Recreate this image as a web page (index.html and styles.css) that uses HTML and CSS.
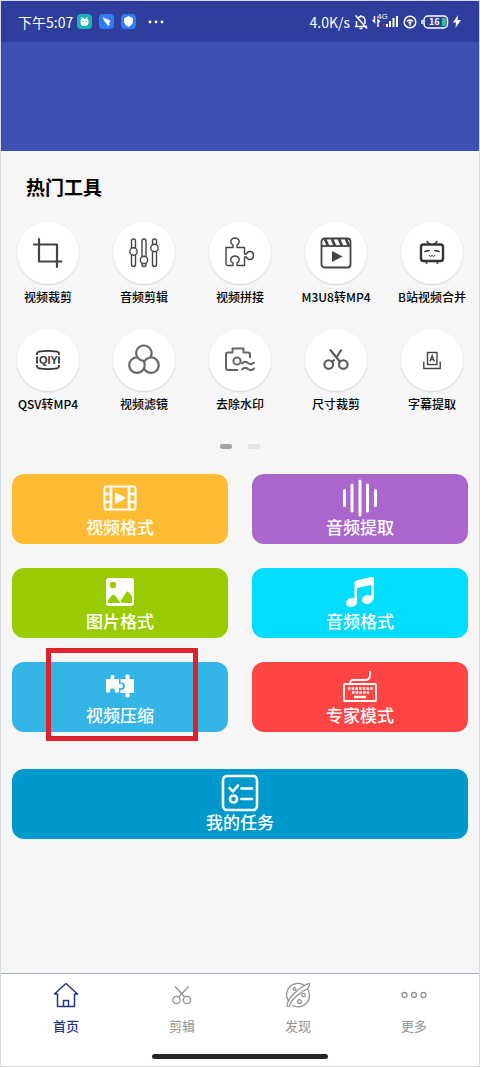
FILE: index.html
```html
<!DOCTYPE html>
<html lang="zh-CN">
<head>
<meta charset="utf-8">
<meta name="viewport" content="width=device-width, initial-scale=1">
<title>热门工具</title>
<link rel="stylesheet" href="styles.css">
</head>
<body>
<div class="app">
  <header class="top">
    <div class="status">
      <div class="status-side">
        <span>下午5:07</span>
        <svg class="badge" width="15" height="15" viewBox="0 0 15 15"><rect width="15" height="15" rx="4" fill="#19b3b5"/><path d="M4 6.500Q4 5 5.500 5h4Q11 5 11 6.500V9q0 2.500-2.500 2.500h-2Q4 11.500 4 9zM4.500 3l1.500 2.500M10.500 3 9 5.500" fill="#fff" stroke="#fff"/><path d="M6 7v1M9 7v1" stroke="#19b3b5"/></svg>
        <svg class="badge" width="15" height="15" viewBox="0 0 15 15"><rect width="15" height="15" rx="4" fill="#2f7df4"/><path d="M3.500 3c3 2 6 2 8 4L10 9.500l1 .5-2.500 3 .3-2L7 10l.5-1L5 7.500h1L4 5.500h1z" fill="#fff"/></svg>
        <svg class="badge" width="15" height="15" viewBox="0 0 15 15"><rect width="15" height="15" rx="4" fill="#2f7df4"/><path d="M7.500 2.500 11.500 4.500v3q0 3-4 5-4-2-4-5v-3z" fill="#fff" stroke="#fff" stroke-linejoin="round"/></svg>
        <svg class="more" width="16" height="4" viewBox="0 0 16 4" fill="#fff"><circle cx="2" cy="2" r="1.400"/><circle cx="8" cy="2" r="1.400"/><circle cx="14" cy="2" r="1.400"/></svg>
      </div>
      <div class="status-side status-right">
        <span>4.0K/s</span>
        <svg width="14" height="16" viewBox="0 0 14 16" fill="none" stroke="#fff" stroke-width="1.500"><path d="M1 12.500h10M2.500 12V7M4 4Q5 2.500 7 2.500q4 0 4 4.500v3M7 1v1M5.500 14.500h3M1.500 1.500l11.500 13M12 12l1 .5"/></svg>
        <svg width="27" height="27" viewBox="0 -5 27 27"><g fill="none" stroke="#fff" stroke-width="1.500"><path d="M2.500 3v6L.5 7M6 14V7l2 2"/></g><g fill="#fff"><rect x="14" y="11" width="2" height="3"/><rect x="17" y="8" width="2" height="6"/><rect x="20.500" y="5" width="2" height="9"/><rect x="24" y="3" width="2" height="11"/></g><rect x="10.500" y="11" width="2" height="2" fill="#b0306b"/><text class="net" x="5" y="6">4G</text></svg>
        <svg width="14" height="14" viewBox="0 0 14 14" fill="none" stroke="#fff" stroke-width="1.500"><circle cx="7" cy="7" r="5.800"/><path d="M4 6.300q3-2.500 6 0M7 6v4.500M5.500 7.800q1.500-1 3 0"/></svg>
        <svg width="28" height="14" viewBox="0 0 28 14"><rect x="3" y="1" width="23.500" height="12" rx="4" fill="none" stroke="#fff" stroke-width="1.500"/><path d="M1 5v4" stroke="#fff" stroke-width="1.500"/><path d="M21 3h2q2 0 2 2v4q0 2-2 2h-2z" fill="#29c793"/><text class="level" x="8" y="10">16</text></svg>
        <svg width="8" height="13" viewBox="0 0 8 13" fill="#fff"><path d="M5 0 0 7.500h3L2.500 13 8 5H4.500z"/></svg>
      </div>
    </div>
    <div class="banner"></div>
  </header>

  <main class="main">
    <h1 class="title">热门工具</h1>
    <div class="tools">
      <button class="tool"><span class="disc"><svg width="32" height="32" viewBox="0 0 32 32" fill="none" stroke="#444" stroke-width="2.200"><path d="M2 7.500H25V30M7 2v22.500h22.500" stroke-linecap="round" stroke-linejoin="round"/></svg></span><span>视频裁剪</span></button>
      <button class="tool"><span class="disc"><svg width="32" height="32" viewBox="0 0 32 32" fill="#fff" stroke="#444" stroke-width="1.400"><rect x="3.500" y="2" width="4" height="27.500" rx="2"/><rect x="14" y="2" width="4" height="27.500" rx="2"/><rect x="24.500" y="2" width="4" height="27.500" rx="2"/><circle cx="5.500" cy="14.500" r="3.700"/><circle cx="16" cy="23" r="3.700"/><circle cx="26.500" cy="11" r="3.700"/></svg></span><span>音频剪辑</span></button>
      <button class="tool"><span class="disc"><svg width="32" height="32" viewBox="0 0 32 32" fill="none" stroke="#444" stroke-width="1.400" stroke-linejoin="round"><path d="M2 10.500h7V8Q6 6 7 3.500q1-2.500 4-2.500t4 2.500Q16 6 13 8v2.500h7.500V17h2q1-3 4-2.500 3 .5 3 4t-3 4q-3 .5-4-2.500h-2v8.500H13V26q3-2 2-4.500-1-2.500-4-2.500t-4 2.500Q6 24 9 26v2.500H4.500Q2 28.500 2 26z"/></svg></span><span>视频拼接</span></button>
      <button class="tool"><span class="disc"><svg width="32" height="32" viewBox="0 0 32 32" fill="none" stroke="#444" stroke-width="1.800"><rect x="1.500" y="1.500" width="29" height="29" rx="3"/><path d="M1.500 9h29"/><path d="M5 2l3 7M12 2l3 7M19 2l3 7M26 2l3 7" stroke-width="2.800"/><path d="M12 14v11l10.500-5.500z" fill="#444" stroke="none"/></svg></span><span>M3U8转MP4</span></button>
      <button class="tool"><span class="disc"><svg width="32" height="32" viewBox="0 0 32 32" fill="none" stroke="#333" stroke-width="2.400" stroke-linecap="round"><rect x="5" y="7.500" width="22" height="16.500" rx="2.500"/><path d="M11 4.500l3 3M21 4.500l-3 3M10 26h1M21 26h1" stroke-width="1.400"/><path d="M9 14.500l4-1M23 14.500l-4-1" stroke-width="1.600"/><path d="M13 18.500q1.500 2 3 0 1.500 2 3 0" stroke-width="1"/></svg></span><span>B站视频合并</span></button>
      <button class="tool"><span class="disc"><svg width="32" height="32" viewBox="0 0 32 32" fill="none" stroke="#333" stroke-width="1.800"><path d="M5 11V9.500q0-1.500 2-1.800 9-1.500 18 0 2 .3 2 1.800V11M5 21v1.500q0 1.500 2 1.800 9 1.500 18 0 2-.3 2-1.800V21M5 12.500v7M27 12.500v7"/><text class="mark" x="7" y="20">QIY</text></svg></span><span>QSV转MP4</span></button>
      <button class="tool"><span class="disc"><svg width="32" height="32" viewBox="0 0 32 32" fill="none" stroke="#6a6a6a" stroke-width="2.200"><path d="M22.300 13.500A7.700 7.700 0 1 0 16.650 16.900"/><path d="M16 24.400A7.700 7.700 0 1 0 16 18"/><path d="M9.700 13.500A7.700 7.700 0 1 0 15.350 16.900"/></svg></span><span>视频滤镜</span></button>
      <button class="tool"><span class="disc"><svg width="32" height="32" viewBox="0 0 32 32" fill="none" stroke="#666" stroke-width="2" stroke-linejoin="round"><path d="M14 26H4Q2 26 2 24V10.500q0-2 2-2h4.500v-4h11v4H24q2 0 2 2V14"/><circle cx="13" cy="17" r="3.600"/><path d="M18 19.500q3-3 6-.5t6-.5M18 25.500q3-3 6-.5t6-.5" stroke-linecap="round"/></svg></span><span>去除水印</span></button>
      <button class="tool"><span class="disc"><svg width="32" height="32" viewBox="0 0 32 32" fill="none" stroke="#555" stroke-width="2"><circle cx="8.700" cy="20.500" r="4.300"/><circle cx="23.300" cy="20.500" r="4.300"/><path d="M10 5.500l10.500 13M21.500 5.500l-4.500 7M14.500 15.500l-3 3"/></svg></span><span>尺寸裁剪</span></button>
      <button class="tool"><span class="disc"><svg width="32" height="32" viewBox="0 0 32 32" fill="none" stroke="#444" stroke-width="1.400"><rect x="11.500" y="8.500" width="9.500" height="12"/><path d="M7.800 17.500v7h16.400v-7"/><path d="M14 17.500l2.200-6 2.200 6M14.800 15.700h2.800" stroke-width="1.300"/></svg></span><span>字幕提取</span></button>
    </div>
    <div class="pager"><span class="dot dot-on"></span><span class="dot"></span></div>

    <div class="cards">
      <button class="card orange"><span class="pic"><svg width="34" height="26" viewBox="0 0 34 26" fill="none" stroke="#fff" stroke-width="2"><rect x="1.500" y="1.500" width="31" height="23" rx="2"/><path d="M8 2v22M26 2v22" stroke-width="2.600"/><path d="M2 9h6M2 17h6M26 9h6M26 17h6" stroke-width="2.600"/><path d="M12.500 8v10.500L22 13z" fill="#fff" stroke-width="1"/></svg></span><span>视频格式</span></button>
      <button class="card purple"><span class="pic"><svg width="36" height="38" viewBox="0 0 36 38" fill="none" stroke="#fff" stroke-width="3" stroke-linecap="round"><path d="M2.500 11.500v15M10 6v26M18 2v34M25.500 6v26M33.500 11.500v15"/></svg></span><span>音频提取</span></button>
      <button class="card green"><span class="pic"><svg width="28" height="28" viewBox="0 0 28 28"><rect width="28" height="28" rx="3" fill="#fff"/><circle cx="7" cy="7" r="3.200" fill="#9c0"/><path d="M2 25v-3l4-4.500q1.500-1.500 3 0L15 25zM16.500 25l-2-2 5.500-8.500q1.500-2 3 0l3 4V25z" fill="#9c0"/></svg></span><span>图片格式</span></button>
      <button class="card cyan"><span class="pic"><svg width="30" height="32" viewBox="0 0 30 32" fill="#fff"><ellipse cx="6.500" cy="26.500" rx="5.500" ry="4.500" transform="rotate(-15 6.500 26.500)"/><ellipse cx="22.500" cy="23.500" rx="5.500" ry="4.500" transform="rotate(-15 22.500 23.500)"/><path d="M9.500 27V7q0-2 2-2.500L26 1q3-.5 3 2v20.500h-2.500V9L12 12v15z"/></svg></span><span>音频格式</span></button>
      <button class="card blue"><span class="pic"><svg width="28" height="24" viewBox="0 0 28 24" fill="#fff"><path d="M0 5h5q-1.500-4 1.500-4T8 5h5v5q4-1 4 2t-4 2v4.500H9q.5-4-2.500-4t-2.500 4H0z"/><path d="M14.500 5H20q-2-4.500 1.500-4.500T23 5h5v14h-5q2 4.500-1.500 4.500T20 19h-5.500v-3q4.500 0 4.500-4t-4.500-3.500z"/></svg></span><span>视频压缩</span><i class="highlight"></i></button>
      <button class="card red"><span class="pic"><svg width="34" height="32" viewBox="0 0 34 32" fill="none" stroke="#fff" stroke-width="1.800"><rect x="1" y="14" width="32" height="17" rx="1"/><path d="M7 14q0-4 3-4h12q5 0 5-5V1"/><path d="M5 18.500h25" stroke-width="2.400" stroke-dasharray="2.500 1.200"/><path d="M9 22.500h17" stroke-width="2.400" stroke-dasharray="2.500 1.200"/><path d="M11 27h12" stroke-width="2.400"/></svg></span><span>专家模式</span></button>
    </div>
    <button class="card task"><span class="pic"><svg width="38" height="38" viewBox="0 0 38 38" fill="none" stroke="#fff" stroke-width="2.600" stroke-linecap="round" stroke-linejoin="round"><rect x="2" y="2" width="34" height="34" rx="4"/><path d="M8.500 14l3.500 3.500L17 11.500M20.500 14.500H31M20.500 25H31"/><circle cx="12.500" cy="25" r="3.500"/></svg></span><span>我的任务</span></button>
  </main>

  <nav class="nav">
    <div class="tabs">
      <a class="tab tab-on" href="#"><svg width="26" height="26" viewBox="0 0 26 26" fill="none" stroke="currentColor" stroke-width="1.500" stroke-linejoin="round"><path d="M4.500 12H1.500L13 1.500 24.500 12h-3v12.500h-17zM10.500 24v-5.500h5V24"/></svg><span>首页</span></a>
      <a class="tab" href="#"><svg width="26" height="26" viewBox="0 0 26 26" fill="none" stroke="currentColor" stroke-width="1.300"><circle cx="7.500" cy="18" r="3.700"/><circle cx="18" cy="18" r="3.700"/><path d="M6 4.500l9.700 10.500M19.500 4.500L9.800 15"/></svg><span>剪辑</span></a>
      <a class="tab" href="#"><svg width="26" height="26" viewBox="0 0 26 26" fill="none" stroke="currentColor" stroke-width="1.300" stroke-linecap="round"><path d="M3.500 19A11.300 11.300 0 0 1 19.500 3.500M22.500 7A11.300 11.300 0 0 1 8 23.500"/><path d="M19.500 3.500Q24 1 24.500 2t-2 5Q17 9 11 14.500 5.500 19.500 4.500 24q-3 1-2.500-1Q3 18 8 12.500 13 7 19.500 3.500"/><circle cx="9.500" cy="7" r="1.300"/><circle cx="18.500" cy="13" r="1.700"/><circle cx="14.500" cy="19.500" r="1.900"/></svg><span>发现</span></a>
      <a class="tab" href="#"><svg width="26" height="26" viewBox="0 0 26 26" fill="none" stroke="currentColor" stroke-width="1.300"><circle cx="3.500" cy="13" r="2.500"/><circle cx="13" cy="13" r="2.500"/><circle cx="22.500" cy="13" r="2.500"/></svg><span>更多</span></a>
    </div>
    <div class="handle"></div>
  </nav>
</div>
</body>
</html>
```
FILE: styles.css
```css
* { box-sizing: border-box; }
body {
  margin: 0;
  background: #f6f6f6;
  font-family: "Noto Sans CJK SC", sans-serif;
  color: #000;
}
button {
  padding: 0;
  border: 0;
  background: none;
  color: inherit;
  font: inherit;
}
svg { display: block; flex: none; }
.app {
  display: flex;
  flex-direction: column;
  min-height: 100vh;
  border: 1px solid #d6dae2;
}
.status {
  display: flex;
  justify-content: space-between;
  height: 41px;
  padding: 0 18px 0 17px;
  background: #2f3d9c;
  color: #fff;
  font-size: 14px;
  line-height: 20px;
}
.status-side { display: flex; align-items: center; gap: 7px; }
.status-side .badge:first-of-type { margin-left: -3px; }
.status-side .more { margin-left: 5px; }
.status-right { gap: 4px; }
.net { fill: #fff; font-family: "Liberation Sans", sans-serif; font-size: 8px; }
.level { fill: #fff; font-size: 9px; font-weight: 700; }
.mark { fill: #333; stroke: none; font-family: "Liberation Sans", sans-serif; font-size: 11px; font-weight: 700; }
.banner { height: 109px; background: #3f50b4; }
.main { flex: 1; padding: 22px 11px; }
.title {
  margin: 0 0 21px;
  padding-left: 14px;
  font-size: 19px;
  line-height: 28px;
  font-weight: 700;
}
.tools {
  display: grid;
  grid-template-columns: repeat(5, 1fr);
  row-gap: 20px;
  margin: 0 -12px;
}
.tool {
  display: flex;
  flex-direction: column;
  align-items: center;
  gap: 1px;
  font-size: 12px;
  line-height: 24px;
  font-weight: 500;
  white-space: nowrap;
}
.disc {
  display: flex;
  align-items: center;
  justify-content: center;
  width: 62px;
  height: 62px;
  border-radius: 50%;
  background: #fff;
  box-shadow: 0 1px 2px #00000026;
}
.pager {
  display: flex;
  justify-content: center;
  gap: 16px;
  padding: 28px 0 25px;
}
.dot { width: 12px; height: 5px; border-radius: 2px; background: #e4e4e4; }
.dot-on { background: #a3a3a3; }
.cards { display: grid; grid-template-columns: 1fr 1fr; gap: 24px; }
.card {
  position: relative;
  display: flex;
  flex-direction: column;
  align-items: center;
  width: 100%;
  height: 70px;
  padding-top: 5px;
  border-radius: 12px;
  color: #fff;
  font-size: 17px;
  line-height: 20px;
  font-weight: 500;
}
.pic { display: flex; align-items: center; height: 38px; }
.orange { background: #ffbb33; }
.purple { background: #aa66cc; }
.green { background: #99cc00; }
.cyan { background: #00ddff; }
.blue { background: #33b5e5; }
.red { background: #ff4444; }
.task { margin-top: 37px; background: #0099cc; }
.highlight {
  position: absolute;
  inset: -14px 30px -9px 34px;
  border: 5px solid #dc222c;
}
.nav { border-top: 1px solid #a4add0; background: #fff; }
.tabs {
  display: grid;
  grid-template-columns: repeat(4, 1fr);
  padding: 8px 7px 0;
}
.tab {
  display: flex;
  flex-direction: column;
  align-items: center;
  gap: 8px;
  color: #929292;
  font-size: 13px;
  line-height: 20px;
  text-decoration: none;
}
.tab-on { color: #26348b; font-weight: 500; }
.handle {
  width: 37%;
  height: 5px;
  margin: 18px auto 7px;
  border-radius: 3px;
  background: #262626;
}
```
